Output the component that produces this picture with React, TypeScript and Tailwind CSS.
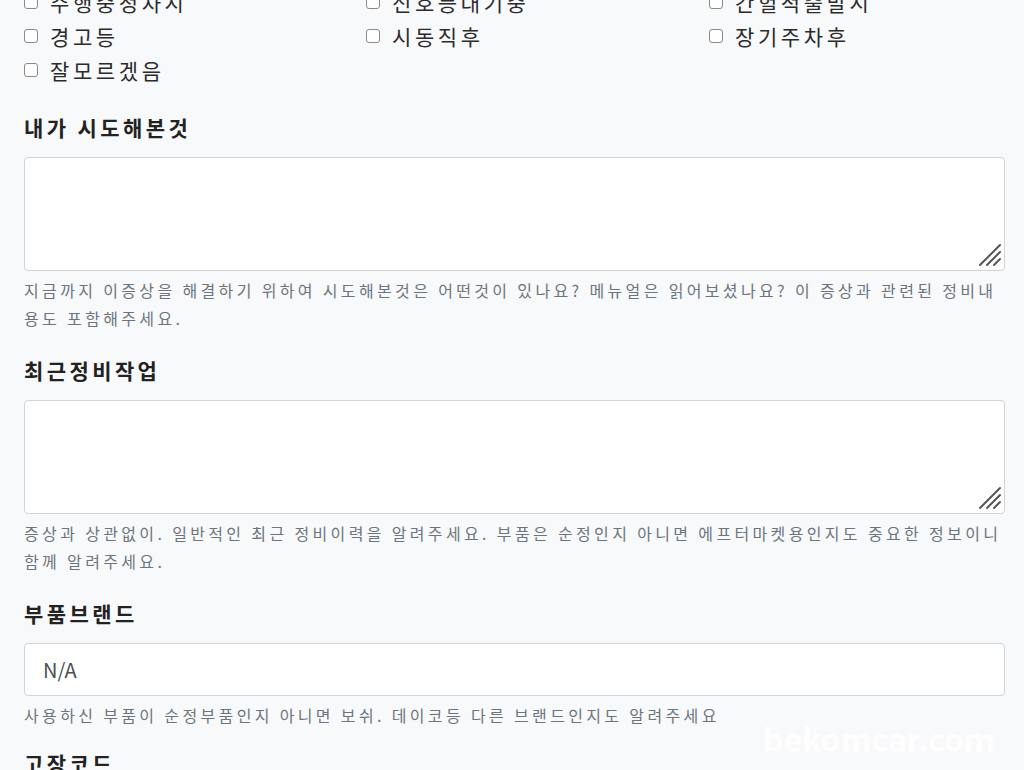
import React from 'react';

const font = { fontFamily: '"Noto Sans CJK KR", "Noto Sans", sans-serif' };

const symptoms = [
  '주행중정차시',
  '신호등대기중',
  '간헐적출발시',
  '경고등',
  '시동직후',
  '장기주차후',
  '잘모르겠음',
];

const Check = ({ label }: { label: string }) => (
  <label className="flex items-center h-[34px] gap-[12px] cursor-pointer">
    <span className="w-[14px] h-[14px] border border-[#8a8a8a] rounded-[3px] bg-white shrink-0" />
    <span className="text-[21px] leading-[34px] tracking-[3.6px] text-[#2b2b2b]">{label}</span>
  </label>
);

const Heading = ({ children }: { children: React.ReactNode }) => (
  <div className="text-[21px] font-bold leading-[28px] tracking-[3.4px] text-[#222] mb-[16px]">
    {children}
  </div>
);

const Help = ({ children }: { children: React.ReactNode }) => (
  <p className="mt-[5px] text-[16px] leading-[28px] tracking-[3.35px] text-[#6c757d]">{children}</p>
);

// textarea with a Windows-style resize grip drawn over its corner
const Area = () => (
  <div className="relative">
    <textarea className="block w-full h-[114px] bg-white border border-[#ced4da] rounded-[4px] resize-none outline-none" />
    <svg
      className="absolute right-[3px] bottom-[4px] pointer-events-none"
      width="24"
      height="24"
      viewBox="0 0 24 24"
      fill="none"
      stroke="#555"
      strokeWidth="2"
      strokeLinecap="round"
    >
      <line x1="2" y1="22" x2="22" y2="2" />
      <line x1="9" y1="22" x2="22" y2="9" />
      <line x1="16" y1="22" x2="22" y2="16" />
    </svg>
  </div>
);

export default function App() {
  return (
    <div style={font} className="relative w-[1024px] h-[770px] overflow-hidden bg-[#f8f9fb]">
      <div className="pl-[24px] pr-[19px]">
        {/* symptom checkboxes */}
        <div className="-mt-[15px] grid grid-cols-[342px_343px_1fr]">
          {symptoms.map((s) => (
            <Check key={s} label={s} />
          ))}
        </div>

        <div className="mt-[26px]">
          <Heading>내가 시도해본것</Heading>
          <Area />
          <Help>
            지금까지 이증상을 해결하기 위하여 시도해본것은 어떤것이 있나요? 메뉴얼은 읽어보셨나요? 이 증상과 관련된 정비내용도 포함해주세요.
          </Help>
        </div>

        <div className="mt-[24px]">
          <Heading>최근정비작업</Heading>
          <Area />
          <Help>
            증상과 상관없이. 일반적인 최근 정비이력을 알려주세요. 부품은 순정인지 아니면 에프터마켓용인지도 중요한 정보이니 함께 알려주세요.
          </Help>
        </div>

        <div className="mt-[24px]">
          <Heading>부품브랜드</Heading>
          <input
            readOnly
            defaultValue="N/A"
            className="block w-full h-[53px] px-[18px] bg-white border border-[#ced4da] rounded-[4px] text-[20px] text-[#495057] outline-none"
          />
          <Help>사용하신 부품이 순정부품인지 아니면 보쉬. 데이코등 다른 브랜드인지도 알려주세요</Help>
        </div>

        <div className="mt-[20px]">
          <Heading>고장코드</Heading>
        </div>
      </div>

      {/* watermark */}
      <div className="absolute left-[763px] top-[714px] text-[32px] font-bold text-white/90 pointer-events-none">
        bekomcar.com
      </div>
    </div>
  );
}
